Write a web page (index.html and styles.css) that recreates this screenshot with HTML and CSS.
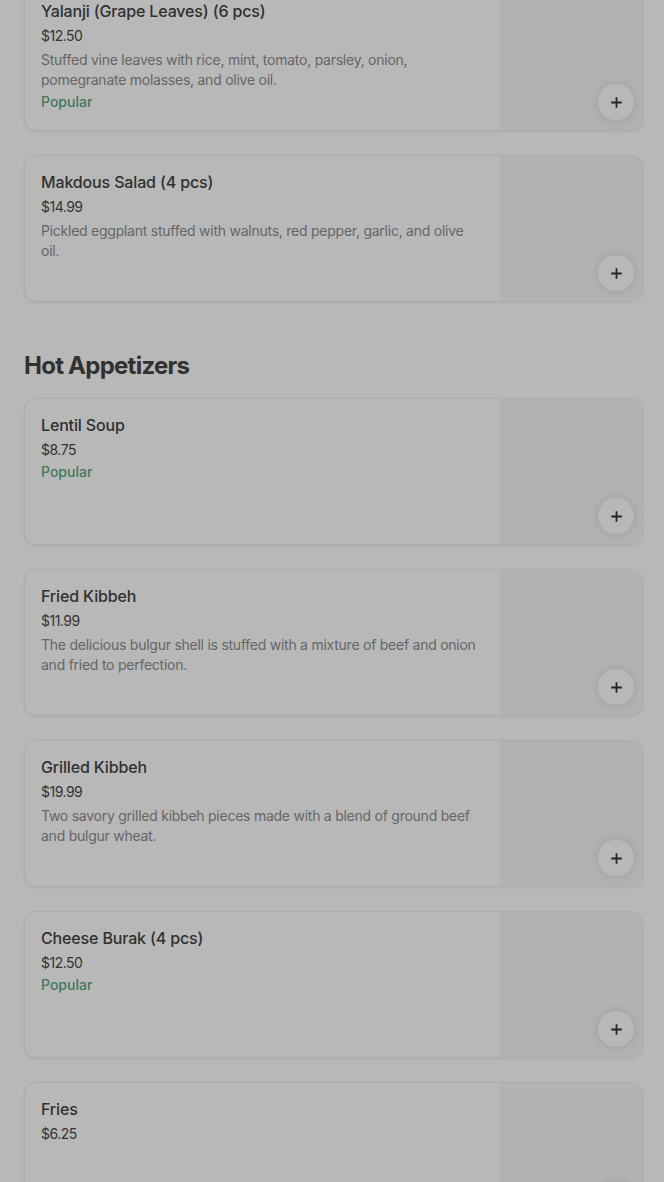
FILE: index.html
```html
<!DOCTYPE html>
<html lang="en">
<head>
<meta charset="utf-8">
<title>Menu</title>
<link rel="stylesheet" href="styles.css">
</head>
<body>
<main class="menu">
  <section class="section section-first">
    <article class="card">
      <div class="info">
        <h3 class="title">Yalanji (Grape Leaves) (6 pcs)</h3>
        <div class="price">$12.50</div>
        <p class="desc">Stuffed vine leaves with rice, mint, tomato, parsley, onion, pomegranate molasses, and olive oil.</p>
        <div class="tag">Popular</div>
      </div>
      <div class="thumb"></div>
      <button class="add" aria-label="Add"><svg viewBox="0 0 16 16" width="13" height="13"><path d="M8 1.5v13M1.5 8h13" stroke="currentColor" stroke-width="2.2"/></svg></button>
    </article>
    <article class="card">
      <div class="info">
        <h3 class="title">Makdous Salad (4 pcs)</h3>
        <div class="price">$14.99</div>
        <p class="desc">Pickled eggplant stuffed with walnuts, red pepper, garlic, and olive oil.</p>
      </div>
      <div class="thumb"></div>
      <button class="add" aria-label="Add"><svg viewBox="0 0 16 16" width="13" height="13"><path d="M8 1.5v13M1.5 8h13" stroke="currentColor" stroke-width="2.2"/></svg></button>
    </article>
  </section>

  <section class="section">
    <h2 class="section-title">Hot Appetizers</h2>
    <article class="card">
      <div class="info">
        <h3 class="title">Lentil Soup</h3>
        <div class="price">$8.75</div>
        <div class="tag">Popular</div>
      </div>
      <div class="thumb"></div>
      <button class="add" aria-label="Add"><svg viewBox="0 0 16 16" width="13" height="13"><path d="M8 1.5v13M1.5 8h13" stroke="currentColor" stroke-width="2.2"/></svg></button>
    </article>
    <article class="card">
      <div class="info">
        <h3 class="title">Fried Kibbeh</h3>
        <div class="price">$11.99</div>
        <p class="desc">The delicious bulgur shell is stuffed with a mixture of beef and onion and fried to perfection.</p>
      </div>
      <div class="thumb"></div>
      <button class="add" aria-label="Add"><svg viewBox="0 0 16 16" width="13" height="13"><path d="M8 1.5v13M1.5 8h13" stroke="currentColor" stroke-width="2.2"/></svg></button>
    </article>
    <article class="card">
      <div class="info">
        <h3 class="title">Grilled Kibbeh</h3>
        <div class="price">$19.99</div>
        <p class="desc">Two savory grilled kibbeh pieces made with a blend of ground beef and bulgur wheat.</p>
      </div>
      <div class="thumb"></div>
      <button class="add" aria-label="Add"><svg viewBox="0 0 16 16" width="13" height="13"><path d="M8 1.5v13M1.5 8h13" stroke="currentColor" stroke-width="2.2"/></svg></button>
    </article>
    <article class="card">
      <div class="info">
        <h3 class="title">Cheese Burak (4 pcs)</h3>
        <div class="price">$12.50</div>
        <div class="tag">Popular</div>
      </div>
      <div class="thumb"></div>
      <button class="add" aria-label="Add"><svg viewBox="0 0 16 16" width="13" height="13"><path d="M8 1.5v13M1.5 8h13" stroke="currentColor" stroke-width="2.2"/></svg></button>
    </article>
    <article class="card">
      <div class="info">
        <h3 class="title">Fries</h3>
        <div class="price">$6.25</div>
      </div>
      <div class="thumb"></div>
      <button class="add" aria-label="Add"><svg viewBox="0 0 16 16" width="13" height="13"><path d="M8 1.5v13M1.5 8h13" stroke="currentColor" stroke-width="2.2"/></svg></button>
    </article>
  </section>
</main>
<div class="scrim"></div>
</body>
</html>
```
FILE: styles.css
```css
* { box-sizing: border-box; }
html, body { margin: 0; padding: 0; }
body {
  background: #ffffff;
  font-family: Inter, "Noto Sans", Arial, sans-serif;
  color: #000;
  overflow: hidden;
  height: 1182px;
}
.menu {
  padding: 0 21px 0 24px;
  margin-top: -16px;
}
.section {
  display: flex;
  flex-direction: column;
  gap: 24px;
}
.section + .section { margin-top: 48px; }
.section-title {
  margin: 0 0 -8px;
  font-size: 24px;
  line-height: 32px;
  font-weight: 700;
  letter-spacing: -0.75px;
  color: #444;
}
.card {
  position: relative;
  display: flex;
  height: 147px;
  border: 1px solid #efefef;
  border-radius: 12px;
  box-shadow: 0 1px 3px rgba(0,0,0,0.06);
  overflow: hidden;
  background: #fff;
}
.info {
  flex: 1;
  padding: 16px;
  min-width: 0;
}
.thumb {
  width: 143px;
  flex: none;
  background: #f7f7f7;
  border-left: 1px solid #fbfbfb;
}
.title {
  margin: 0;
  font-size: 16px;
  line-height: 20px;
  font-weight: 500;
  color: #444;
  letter-spacing: -0.15px;
}
.price {
  margin-top: 5px;
  font-size: 14px;
  line-height: 20px;
  color: #4a4a4a;
  letter-spacing: -0.5px;
}
.desc {
  margin: 4px 0 0;
  font-size: 14px;
  line-height: 20px;
  color: #8e8e8e;
  letter-spacing: -0.25px;
}
.tag {
  margin-top: 2px;
  font-size: 14px;
  line-height: 20px;
  font-weight: 500;
  color: #5aa882;
}
.add {
  position: absolute;
  right: 8px;
  bottom: 10px;
  width: 36px;
  height: 36px;
  border-radius: 50%;
  border: none;
  background: #fff;
  color: #333;
  box-shadow: 0 0 10px 2px rgba(0,0,0,0.08);
  display: flex;
  align-items: center;
  justify-content: center;
  padding: 0;
}
.scrim {
  position: fixed;
  inset: 0;
  background: rgba(0,0,0,0.28);
}
```
